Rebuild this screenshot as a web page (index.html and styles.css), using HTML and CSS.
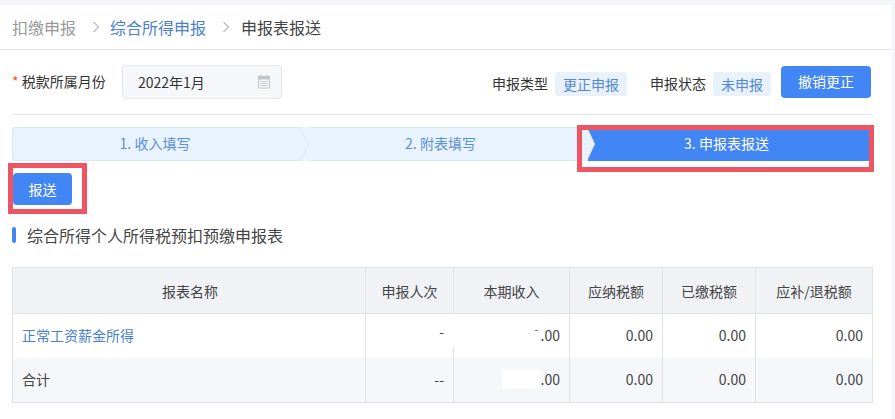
FILE: index.html
```html
<!DOCTYPE html>
<html lang="zh">
<head>
<meta charset="utf-8">
<title>申报表报送</title>
<link rel="stylesheet" href="styles.css">
</head>
<body>
<div class="card">
  <nav class="crumbs">
    <span class="crumb-muted">扣缴申报</span>
    <svg class="chev chev-first" viewBox="0 0 8 12"><path d="M1.500 1 6.500 6l-5 5"/></svg>
    <span class="crumb-link">综合所得申报</span>
    <svg class="chev" viewBox="0 0 8 12"><path d="M1.500 1 6.500 6l-5 5"/></svg>
    <span class="crumb-current">申报表报送</span>
  </nav>
  <main class="content">
    <div class="form-row">
      <div class="field-label"><span class="req">*</span> 税款所属月份</div>
      <div class="date-input">
        <span>2022年1月</span>
        <svg class="cal" viewBox="0 0 14 15"><path class="cal-head" d="M1 2h12v3.500H1z"/><path d="M1.500 2.500h11v11.500h-11zM4 .5v2M10 .5v2M3.500 7.500h2M6 7.500h2M8.500 7.500h2M3.500 9.500h2M6 9.500h2M8.500 9.500h2M3.500 11.500h7"/></svg>
      </div>
      <div class="status">
        <span class="status-label">申报类型</span>
        <span class="tag">更正申报</span>
        <span class="status-label status-gap">申报状态</span>
        <span class="tag">未申报</span>
        <button class="btn btn-revoke">撤销更正</button>
      </div>
    </div>
    <div class="steps">
      <div class="step step-1">1. 收入填写
        <svg class="arrow" viewBox="0 0 11 34" preserveAspectRatio="none"><path class="arrow-fill" d="M0 0 10 17 0 34h11V0z"/><path class="arrow-line" d="M0 0 10 17 1 34"/></svg>
      </div>
      <div class="step step-2">2. 附表填写</div>
      <div class="step step-3">
        <svg class="notch" viewBox="0 0 14 34" preserveAspectRatio="none"><path d="M0 0h5l8 17-8 17H0z"/></svg>
        3. 申报表报送
      </div>
    </div>
    <button class="btn btn-submit">报送</button>
    <h2 class="section-title">综合所得个人所得税预扣预缴申报表</h2>
    <table class="report">
      <colgroup>
        <col class="c-name"><col class="c-count"><col class="c-income"><col class="c-tax"><col class="c-tax"><col class="c-last">
      </colgroup>
      <thead>
        <tr><th>报表名称</th><th>申报人次</th><th>本期收入</th><th>应纳税额</th><th>已缴税额</th><th>应补/退税额</th></tr>
      </thead>
      <tbody>
        <tr class="detail"><td class="left link">正常工资薪金所得</td><td class="up">-</td><td>.00</td><td>0.00</td><td>0.00</td><td>0.00</td></tr>
        <tr class="total"><td class="left">合计</td><td>--</td><td>.00</td><td>0.00</td><td>0.00</td><td>0.00</td></tr>
      </tbody>
    </table>
  </main>
  <div class="mark mark-step"></div>
  <div class="mark mark-btn"></div>
  <div class="mask mask-1"></div>
  <div class="mask mask-2"></div>
  <div class="tick"></div>
</div>
</body>
</html>
```
FILE: styles.css
```css
* { box-sizing: border-box; }
html, body { margin: 0; height: 100%; }
body {
  background: #f3f5f9;
  padding: 5px 3px 0 0;
  overflow: hidden;
  font-family: "Noto Sans CJK SC", "Liberation Sans", sans-serif;
  font-size: 14px;
  color: #333;
}
.card { position: relative; background: #fff; height: 414px; }
.crumbs {
  height: 45px;
  display: flex;
  align-items: center;
  padding-left: 12px;
  border-bottom: 1px solid #e4e7ed;
  font-size: 16px;
}
.crumb-muted { color: #999; }
.crumb-link { color: #4a7fd0; }
.crumb-current { color: #444; }
.chev { width: 8px; height: 12px; margin: 0 11px 0 16px; fill: none; stroke: #8a8f99; stroke-width: 1; }
.chev-first { margin-right: 10px; }
.content { padding: 15px 20px 0 12px; }
.form-row {
  display: flex;
  align-items: center;
  height: 50px;
  padding-bottom: 15px;
  border-bottom: 1px solid #e4e7ed;
}
.field-label { width: 110px; color: #333; white-space: nowrap; padding-bottom: 2px; }
.req { color: #e8542a; }
.date-input {
  width: 160px;
  height: 34px;
  display: flex;
  align-items: center;
  justify-content: space-between;
  padding: 0 10px 1px 15px;
  background: #f5f7fa;
  border: 1px solid #e4e7ed;
  border-radius: 4px;
  color: #333;
}
.cal { width: 14px; height: 15px; fill: none; stroke: #c0c4cc; stroke-width: 1; }
.cal-head { fill: #c0c4cc; stroke: none; }
.status { margin-left: auto; margin-right: 1px; display: flex; align-items: center; }
.status-label { color: #333; margin-right: 7px; position: relative; top: 1px; }
.status-gap { margin-left: 23px; }
.tag {
  height: 24px;
  line-height: 24px;
  padding: 0 8px;
  background: #e9f1fb;
  border-radius: 3px;
  color: #4f87d9;
  position: relative;
  top: 2px;
}
.btn {
  border: 0;
  font: inherit;
  color: #fff;
  background: #4285f4;
  border-radius: 4px;
}
.btn-revoke { width: 90px; height: 32px; margin-left: 10px; padding: 0 0 2px; }
.steps { display: flex; height: 34px; margin-top: 12px; }
.step {
  position: relative;
  display: flex;
  align-items: center;
  justify-content: center;
  color: #5a8fdc;
  background: #e8f3fe;
  border-top: 1px solid #dbe8f7;
  border-bottom: 1px solid #dbe8f7;
  padding-bottom: 2px;
}
.step-1 { width: 289px; border-left: 1px solid #dbe8f7; border-radius: 3px 0 0 3px; padding-right: 4px; }
.step-2 { width: 287px; padding-right: 8px; }
.step-3 { width: 284px; background: #4285f4; color: #fff; border: 0; height: 34px; padding-right: 7px; }
.arrow { position: absolute; right: -9px; top: -1px; width: 11px; height: 34px; z-index: 1; }
.arrow-fill { fill: #e8f3fe; }
.arrow-line { fill: none; stroke: #dbe8f7; stroke-width: 1; }
.notch { position: absolute; left: -6px; top: 0; width: 14px; height: 34px; fill: #e8f3fe; }
.btn-submit { display: block; width: 59px; height: 32px; margin: 12px 0 0 1px; }
.section-title {
  margin: 19px 0 0;
  padding-left: 15px;
  position: relative;
  font-size: 16px;
  font-weight: 400;
  line-height: 22px;
  color: #444;
}
.section-title::before {
  content: "";
  position: absolute;
  left: 0;
  top: 3px;
  width: 4px;
  height: 16px;
  background: #4285f4;
  border-radius: 2px;
}
.report {
  width: 860px;
  margin-top: 21px;
  border-collapse: collapse;
  table-layout: fixed;
  color: #444;
}
.c-name { width: 353px; }
.c-count { width: 88px; }
.c-income { width: 116px; }
.c-tax { width: 93px; }
.c-last { width: 117px; }
.report th, .report td { border: 1px solid #e0e3e9; }
.report th {
  height: 46px;
  padding: 0;
  background: #f0f2f6;
  font-weight: 400;
  color: #444;
}
.report th:first-child { padding-left: 2px; }
.report td { height: 44px; padding: 0 9px 2px; text-align: right; }
.report td.left { text-align: left; }
.report td.link { color: #4a7fd0; }
.report td.up { vertical-align: top; padding-top: 7px; }
.detail td { border-bottom: 0; }
.total td { background: #f5f7fa; border-top: 0; height: 45px; }
.mark { position: absolute; border: 5px solid #ec5561; }
.mark-step { left: 577px; top: 120px; width: 297px; height: 47px; }
.mark-btn { left: 8px; top: 158px; width: 79px; height: 51px; }
.mask { position: absolute; background: #fff; }
.mask-1 { left: 446px; top: 309px; width: 89px; height: 33px; }
.mask-2 { left: 502px; top: 365px; width: 38px; height: 19px; }
.tick { position: absolute; left: 535px; top: 325px; width: 3px; height: 1px; background: #777; }
```
